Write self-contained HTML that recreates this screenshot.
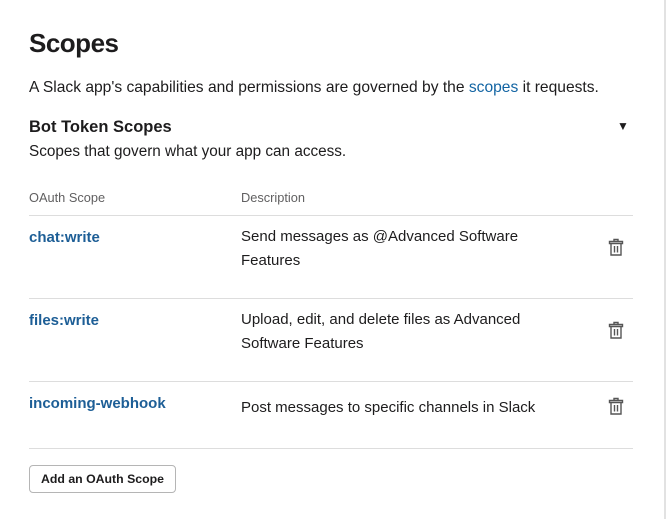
<!DOCTYPE html>
<html><head><style>
body{margin:0;width:667px;height:519px;background:#fff;font-family:"Liberation Sans",sans-serif;color:#1d1c1d;position:relative;overflow:hidden}
.vr{position:absolute;left:664px;top:0;width:2px;height:519px;background:#e2e2e2}
.a{position:absolute;white-space:nowrap}
h1{position:absolute;left:29px;top:28px;margin:0;font-size:26px;font-weight:bold;letter-spacing:-0.5px}
.p{font-size:15px}
.lnk{color:#1264a3}
.hr{position:absolute;left:29px;width:604px;height:1px;background:#dddddd}
.sc{font-weight:bold;color:#1d5e96;font-size:15px}
.th{font-size:12.8px;color:#616061}
.tr{position:absolute;left:608px}
.btn{position:absolute;left:29px;top:465px;width:145px;height:26px;border:1px solid #b5b5b5;border-radius:4px;font-size:12.3px;font-weight:bold;text-align:center;line-height:26px;box-sizing:content-box}
</style></head><body>
<div class="vr"></div>
<h1>Scopes</h1>
<div class="a" style="left:29px;top:79px;font-size:15.6px">A Slack app's capabilities and permissions are governed by the <span class="lnk">scopes</span> it requests.</div>
<div class="a" style="left:29px;top:118px;font-size:16.5px;font-weight:bold">Bot Token Scopes</div>
<div class="a" style="left:617px;top:119px;font-size:12px">▼</div>
<div class="a" style="left:29px;top:143px;font-size:15.3px">Scopes that govern what your app can access.</div>
<div class="a th" style="left:29px;top:190px">OAuth Scope</div>
<div class="a th" style="left:241px;top:190px">Description</div>
<div class="hr" style="top:215px"></div>
<div class="a sc" style="left:29px;top:229px">chat:write</div>
<div class="a p" style="left:241px;top:225px;line-height:24px">Send messages as @Advanced Software<br>Features</div>
<div class="hr" style="top:298px"></div>
<div class="a sc" style="left:29px;top:312px">files:write</div>
<div class="a p" style="left:241px;top:308px;line-height:24px">Upload, edit, and delete files as Advanced<br>Software Features</div>
<div class="hr" style="top:381px"></div>
<div class="a sc" style="left:29px;top:395px">incoming-webhook</div>
<div class="a p" style="left:241px;top:399px">Post messages to specific channels in Slack</div>
<div class="hr" style="top:448px"></div>
<svg class="tr" style="top:238px" width="16" height="19" viewBox="0 0 16 19" fill="none" stroke="#555" stroke-width="1.4"><path d="M6 3V1.5h4V3M1.5 3.5h13v2h-13zM3 5.5v11.5h10V5.5M6.5 8v6.5M9.5 8v6.5"/></svg>
<svg class="tr" style="top:321px" width="16" height="19" viewBox="0 0 16 19" fill="none" stroke="#555" stroke-width="1.4"><path d="M6 3V1.5h4V3M1.5 3.5h13v2h-13zM3 5.5v11.5h10V5.5M6.5 8v6.5M9.5 8v6.5"/></svg>
<svg class="tr" style="top:397px" width="16" height="19" viewBox="0 0 16 19" fill="none" stroke="#555" stroke-width="1.4"><path d="M6 3V1.5h4V3M1.5 3.5h13v2h-13zM3 5.5v11.5h10V5.5M6.5 8v6.5M9.5 8v6.5"/></svg>
<div class="btn">Add an OAuth Scope</div>
</body></html>
